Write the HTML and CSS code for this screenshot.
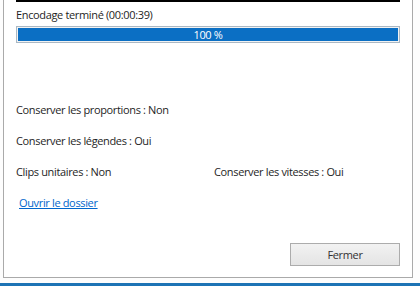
FILE: index.html
```html
<!DOCTYPE html>
<html lang="fr">
<head>
    <meta charset="UTF-8">
    <title>Encodage terminé</title>
    <link rel="stylesheet" href="styles.css">
</head>
<body>

    <!-- Window frame -->
    <div class="window">
        <div class="panel">
            <div class="top-rule"></div>

            <div class="status">Encodage terminé (00:00:39)</div>
            <div class="progress">
                <div class="progress-fill" style="width: 100%;">100 %</div>
            </div>

            <!-- Options summary -->
            <div class="options">
                <div class="row">Conserver les proportions : Non</div>
                <div class="row">Conserver les légendes : Oui</div>
                <div class="row split">
                    <span class="col">Clips unitaires : Non</span>
                    <span class="col">Conserver les vitesses : Oui</span>
                </div>
                <div class="row link-row"><a href="#">Ouvrir le dossier</a></div>
            </div>

            <div class="actions">
                <button class="btn">Fermer</button>
            </div>
        </div>
    </div>

</body>
</html>
```

FILE: styles.css
```css
/* Page */
body {
    margin: 0;
    background: #ffffff;
    font-family: "Open Sans", "DejaVu Sans", sans-serif;
    font-size: 11px;
    letter-spacing: -0.35px;
    color: #1e1e1e;
}

/* Window frame */
.window {
    width: 420px;
    height: 286px;
    box-sizing: border-box;
    background: #fdfdfd;
    border-bottom: 3px solid #1d73b5;
    padding: 0 7px 5px 3px;
}

.panel {
    height: 100%;
    box-sizing: border-box;
    background: #ffffff;
    border-left: 1px solid #aaaaaa;
    border-right: 1px solid #aaaaaa;
    border-bottom: 1px solid #aaaaaa;
    padding: 0 12px 0 12px;
    display: flex;
    flex-direction: column;
}

.top-rule {
    height: 2px;
    background: #000000;
}

.status {
    margin-top: 4px;
    height: 17px;
    line-height: 17px;
}

/* Progress bar */
.progress {
    margin-top: 3px;
    height: 17px;
    box-sizing: border-box;
    border: 1px solid #aab8c4;
    background: #f2f2f2;
    padding: 1px;
}

.progress-fill {
    height: 100%;
    background: #0b6fc4;
    color: #ffffff;
    text-align: center;
    line-height: 13px;
}

/* Options */
.options {
    margin-top: 58px;
    display: flex;
    flex-direction: column;
    gap: 14px;
}

.row {
    height: 17px;
    line-height: 17px;
}

.split {
    display: flex;
}

.split .col:first-child {
    width: 198px;
    flex-shrink: 0;
}

.link-row {
    padding-left: 3px;
}

.link-row a {
    color: #0066cc;
}

/* Footer */
.actions {
    margin-top: auto;
    display: flex;
    justify-content: flex-end;
    padding-bottom: 11px;
}

.btn {
    width: 110px;
    height: 23px;
    border: 1px solid #acacac;
    background: linear-gradient(#f2f2f2, #e4e4e4);
    font-family: inherit;
    font-size: 11px;
    letter-spacing: -0.35px;
    color: #333333;
    padding: 0;
}
```
